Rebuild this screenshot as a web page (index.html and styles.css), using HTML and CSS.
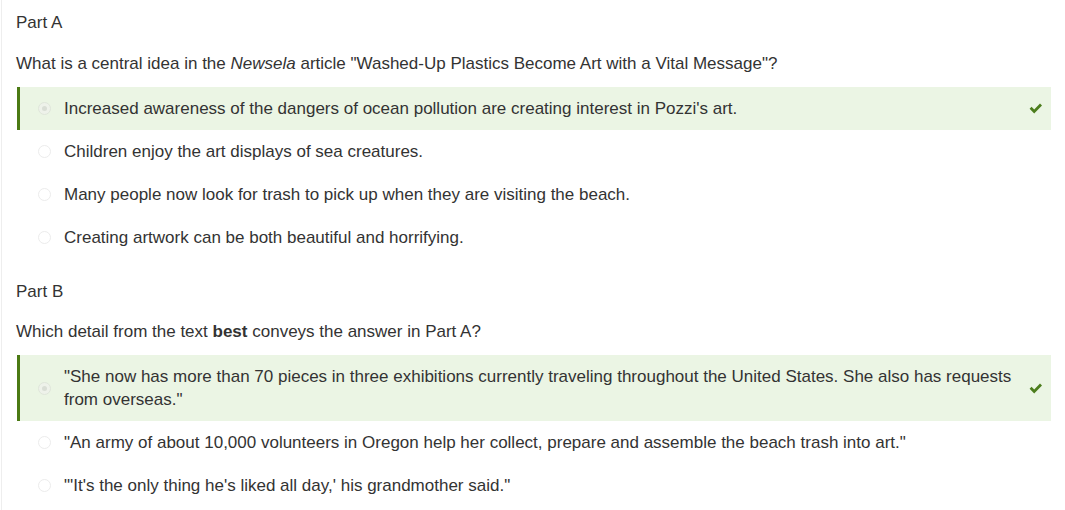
FILE: index.html
```html
<!DOCTYPE html>
<html>
<head>
<meta charset="utf-8">
<link rel="stylesheet" href="styles.css">
</head>
<body>
<div class="page">
  <section class="part">
    <div class="part-label">Part A</div>
    <div class="question">What is a central idea in the <em>Newsela</em> article "Washed-Up Plastics Become Art with a Vital Message"?</div>
    <ul class="options">
      <li class="option correct">
        <span class="radio checked"></span>
        <span class="text">Increased awareness of the dangers of ocean pollution are creating interest in Pozzi's art.</span>
        <svg class="check" width="14" height="11" viewBox="0 0 14 11"><path d="M0.6 5.8 L2.6 3.8 L5.2 6.4 L11 0.6 L13 2.6 L5.2 10.4 Z" fill="#4c7d1d"/></svg>
      </li>
      <li class="option"><span class="radio"></span><span class="text">Children enjoy the art displays of sea creatures.</span></li>
      <li class="option"><span class="radio"></span><span class="text">Many people now look for trash to pick up when they are visiting the beach.</span></li>
      <li class="option"><span class="radio"></span><span class="text">Creating artwork can be both beautiful and horrifying.</span></li>
    </ul>
  </section>
  <section class="part part-b">
    <div class="part-label">Part B</div>
    <div class="question">Which detail from the text <strong>best</strong> conveys the answer in Part A?</div>
    <ul class="options">
      <li class="option correct">
        <span class="radio checked"></span>
        <span class="text">"She now has more than 70 pieces in three exhibitions currently traveling throughout the United States. She also has requests from overseas."</span>
        <svg class="check" width="14" height="11" viewBox="0 0 14 11"><path d="M0.6 5.8 L2.6 3.8 L5.2 6.4 L11 0.6 L13 2.6 L5.2 10.4 Z" fill="#4c7d1d"/></svg>
      </li>
      <li class="option"><span class="radio"></span><span class="text">"An army of about 10,000 volunteers in Oregon help her collect, prepare and assemble the beach trash into art."</span></li>
      <li class="option"><span class="radio"></span><span class="text">"'It's the only thing he's liked all day,' his grandmother said."</span></li>
    </ul>
  </section>
</div>
</body>
</html>
```

FILE: styles.css
```css
html, body {
  margin: 0;
  padding: 0;
  background: #fff;
}
body {
  font-family: "Liberation Sans", Arial, sans-serif;
  font-size: 17px;
  line-height: 23px;
  color: #333;
}
.page {
  margin-left: 1px;
  border-left: 1px solid #eeeeee;
  padding: 11px 14px 0 14px;
  min-height: 499px;
}
.part-label {
  margin-bottom: 18px;
}
.question {
  margin-bottom: 12px;
}
.part-b {
  margin-top: 21px;
}
.part-b .part-label {
  margin-bottom: 17px;
}
.options {
  list-style: none;
  margin: 0;
  padding: 0;
}
.option {
  display: flex;
  align-items: center;
  border-left: 3px solid transparent;
  padding: 10px 8px 10px 18px;
  min-height: 23px;
  margin-left: 1px;
}
.option.correct {
  background: #ebf5e4;
  border-left-color: #4b7a14;
}
.radio {
  flex: none;
  width: 11px;
  height: 11px;
  border: 1px solid #ececec;
  border-radius: 50%;
  margin-right: 13px;
  position: relative;
  background: #fff;
}
.correct .radio {
  border-color: #dfe6da;
  background: #eef2ea;
}
.radio.checked::after {
  content: "";
  position: absolute;
  left: 3px;
  top: 3px;
  width: 5px;
  height: 5px;
  border-radius: 50%;
  background: #d9ded5;
}
.text {
  flex: 1;
  min-width: 0;
}
.check {
  flex: none;
  margin-left: 12px;
}
```
